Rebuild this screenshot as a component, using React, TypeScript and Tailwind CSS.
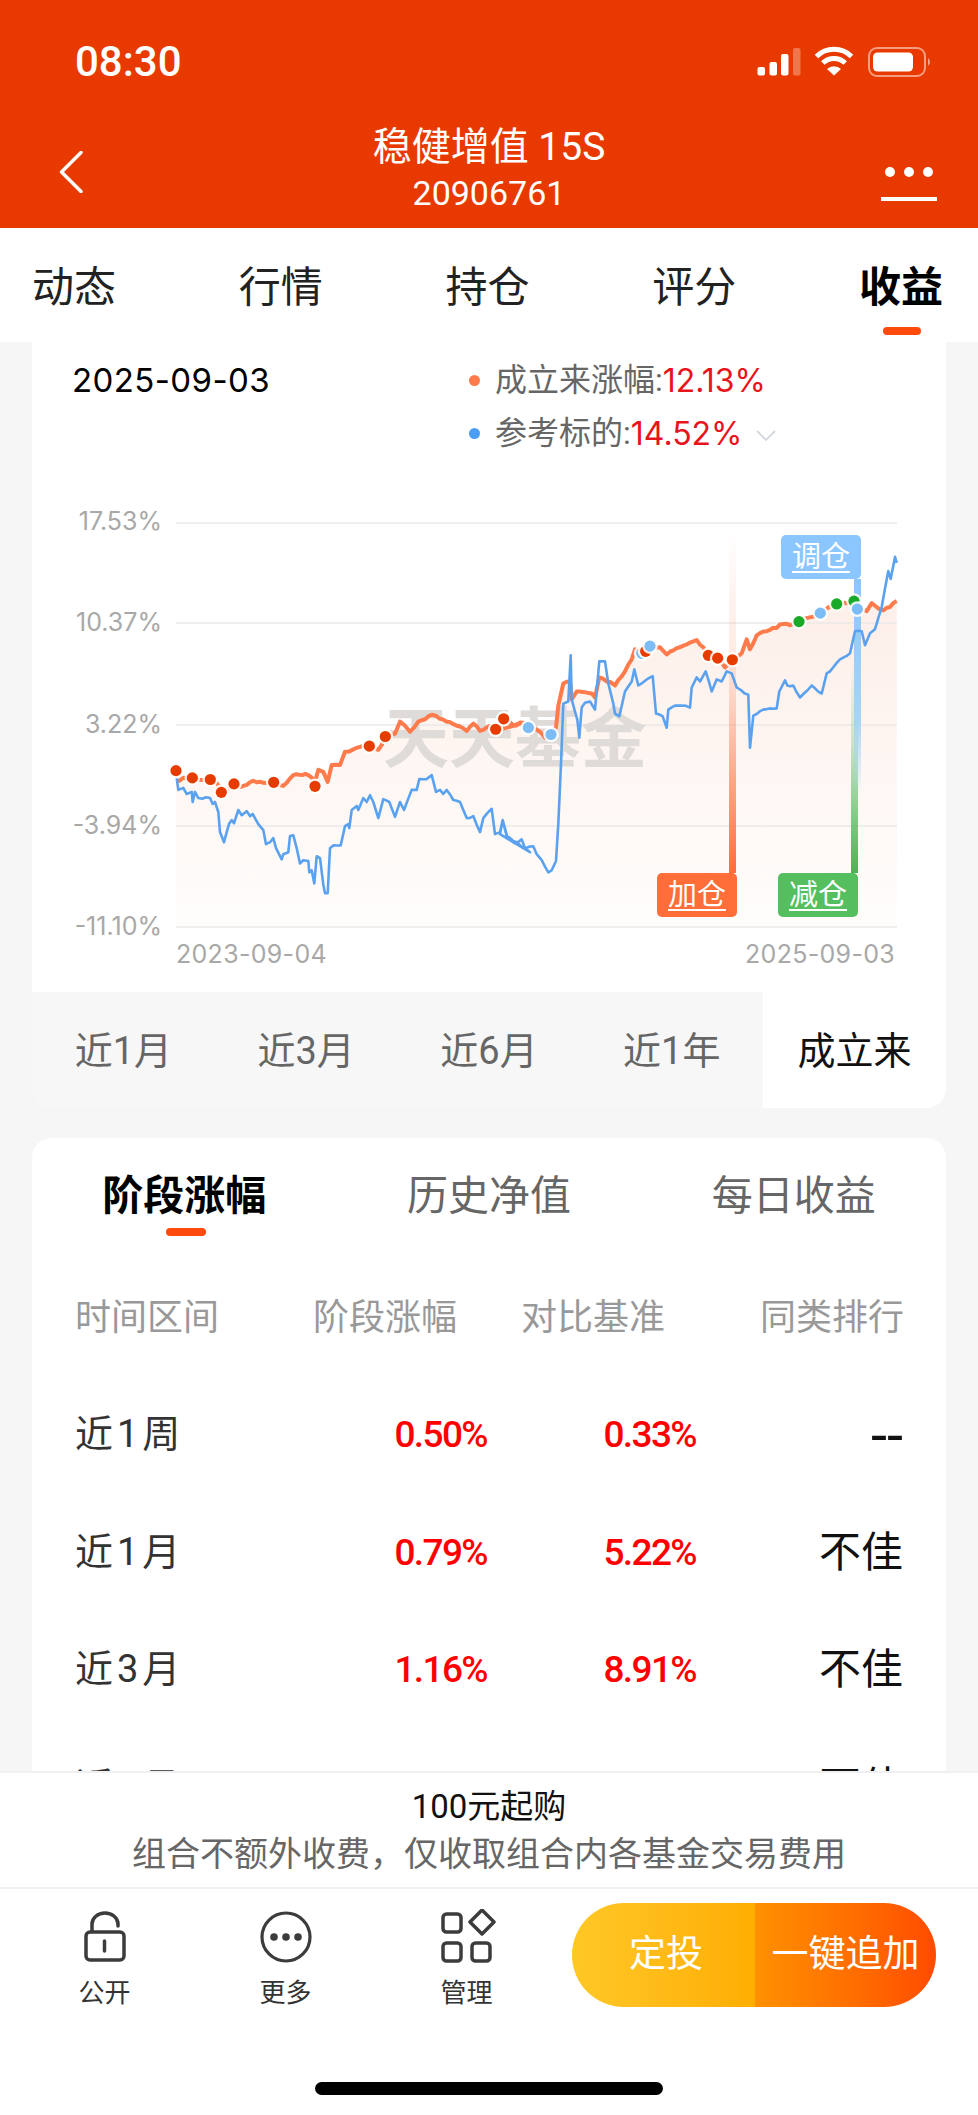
import React from "react";

// chart points were read off the crops, so map them back to page pixels
const a = (pts: number[][]) => pts.map(([x, y]) => [30 + x / 3, 350 + y / 2.489]);
const b = (pts: number[][]) => pts.map(([x, y]) => [500 + x / 3, 350 + y / 2.489]);
const str = (pts: number[][]) => pts.map(([x, y]) => `${x.toFixed(1)},${y.toFixed(1)}`).join(" ");

// daily noise between the read points, fixed so every render is the same
const rough = (pts: number[][], amp: number) => {
  const out: number[][] = [];
  let n = 0;
  pts.forEach((p, i) => {
    out.push(p);
    const next = pts[i + 1];
    if (!next) return;
    const steps = Math.floor((next[0] - p[0]) / 3);
    for (let s = 1; s < steps; s++) {
      n += 1;
      const r = Math.sin(n * 12.9898) * 43758.5453;
      const t = s / steps;
      out.push([p[0] + (next[0] - p[0]) * t, p[1] + (next[1] - p[1]) * t + (r - Math.floor(r) - 0.5) * amp]);
    }
  });
  return out;
};

const bluePts = [
  ...a([
    [440, 1065], [445, 1095], [460, 1090], [470, 1105], [485, 1100], [488, 1125], [495, 1100], [505, 1115], [540, 1115], [548, 1130],
    [555, 1125], [565, 1150], [570, 1200], [582, 1225], [590, 1200], [597, 1180], [605, 1170], [612, 1178], [625, 1145], [635, 1158],
    [650, 1148], [660, 1160], [668, 1155], [685, 1180], [700, 1195], [708, 1230], [720, 1225], [730, 1215], [738, 1240], [755, 1268],
    [760, 1255], [775, 1250], [780, 1210], [790, 1208], [800, 1240], [810, 1278], [820, 1270], [835, 1272], [838, 1300], [845, 1295],
    [853, 1328], [860, 1260], [870, 1265], [880, 1330], [885, 1352], [893, 1352], [900, 1240], [910, 1233], [932, 1233], [945, 1185],
    [955, 1180], [958, 1190], [965, 1145], [980, 1135], [985, 1145], [1000, 1115], [1010, 1125], [1020, 1108], [1030, 1125], [1045, 1165],
    [1060, 1118], [1078, 1125], [1095, 1162], [1110, 1125], [1122, 1145], [1145, 1095], [1160, 1095], [1168, 1068], [1190, 1068], [1205, 1058],
    [1218, 1100], [1230, 1095], [1240, 1105], [1250, 1095], [1270, 1120], [1290, 1125], [1310, 1165], [1330, 1160], [1350, 1200], [1360, 1165],
    [1385, 1142], [1395, 1205], [1410, 1200], [1418, 1170], [1432, 1212], [1455, 1228], [1475, 1218], [1485, 1240], [1500, 1250],
  ]),
  ...b([
    [0, 1205], [8, 1170], [20, 1210], [50, 1225], [70, 1240], [100, 1235], [110, 1255], [125, 1270], [145, 1300], [155, 1295],
    [168, 1272], [175, 1180], [183, 1030], [190, 880], [205, 875], [212, 760], [215, 870], [225, 900], [232, 920], [238, 965],
    [245, 890], [255, 878], [270, 875], [285, 895], [298, 775], [315, 775], [325, 830], [340, 880], [345, 905], [358, 912],
    [375, 850], [395, 825], [403, 795], [415, 835], [440, 820], [458, 812], [468, 905], [488, 912], [500, 940], [505, 895],
    [525, 885], [545, 885], [570, 890], [575, 840], [590, 815], [600, 825], [617, 800], [635, 850], [650, 820], [665, 825],
    [680, 800], [695, 805], [710, 840], [745, 858], [750, 990], [760, 910], [790, 895], [830, 892], [838, 850], [855, 822],
    [862, 835], [880, 835], [900, 865], [935, 835], [965, 855], [980, 805], [990, 800], [1020, 770], [1050, 755], [1065, 700],
    [1085, 700], [1095, 735], [1110, 705], [1125, 695], [1145, 640], [1165, 550], [1172, 570], [1185, 515], [1190, 530],
  ]),
];

const orangePts = [
  ...a([
    [438, 1072], [470, 1065], [520, 1070], [560, 1078], [575, 1095], [610, 1085], [640, 1085], [670, 1072], [710, 1078], [730, 1078],
    [760, 1085], [790, 1058], [835, 1058], [855, 1075], [865, 1045], [880, 1050], [893, 1075], [905, 1033], [930, 1033], [945, 1000],
    [980, 990], [1015, 985], [1045, 995], [1065, 965], [1095, 955], [1110, 925], [1125, 935], [1140, 950], [1165, 925], [1205, 908],
    [1240, 920], [1280, 935], [1310, 948], [1330, 930], [1350, 948], [1380, 935], [1400, 945], [1420, 920], [1450, 935], [1480, 928],
  ]),
  ...b([
    [0, 945], [12, 918], [40, 935], [70, 928], [85, 940], [120, 950], [135, 965], [155, 958], [168, 940], [175, 885],
    [190, 830], [210, 825], [215, 870], [230, 850], [275, 855], [285, 865], [298, 815], [320, 825], [345, 835], [375, 800],
    [395, 770], [405, 745], [430, 750], [450, 738], [480, 740], [500, 758], [540, 740], [590, 722], [610, 740], [625, 760],
    [655, 768], [675, 790], [697, 770], [725, 755], [740, 720], [750, 745], [770, 710], [800, 700], [850, 682], [870, 685],
    [895, 675], [960, 655], [1010, 632], [1062, 625], [1072, 645], [1100, 650], [1115, 630], [1150, 648], [1170, 640], [1190, 625],
  ]),
];

const dots = [
  ...a([[438, 1047], [487, 1065], [541, 1069], [574, 1101], [612, 1080], [731, 1076], [855, 1086], [1018, 986], [1066, 962], [1397, 944], [1421, 918]]).map((p) => ({ p, c: "#e63c00" })),
  ...b([[85, 940], [153, 957], [425, 755]]).map((p) => ({ p, c: "#7cbdf5" })),
  ...b([[437, 750], [625, 760], [653, 767], [697, 771]]).map((p) => ({ p, c: "#e63c00" })),
  ...b([[450, 737], [961, 655], [897, 676], [1010, 632], [1062, 625], [1072, 645]]).map((p, i) => ({ p, c: i === 0 || i === 1 || i === 5 ? "#7cbdf5" : "#1aaa28" })),
];

const gridYs = [523, 623, 725, 826, 927];

function Chart() {
  return (
    <svg viewBox="176 507 721 433" className="absolute inset-0 h-[433px] w-[721px] overflow-visible">
      <defs>
        <linearGradient id="area" x1="0" y1="0" x2="0" y2="1">
          <stop offset="0" stopColor="#fdefe9" />
          <stop offset="1" stopColor="#fffdfc" />
        </linearGradient>
        <linearGradient id="barO" x1="0" y1="0" x2="0" y2="1">
          <stop offset="0" stopColor="#ff7a4a" stopOpacity="0" />
          <stop offset="0.45" stopColor="#ff7a4a" stopOpacity="0.2" />
          <stop offset="1" stopColor="#ff6d38" />
        </linearGradient>
        <linearGradient id="barB" x1="0" y1="0" x2="0" y2="1">
          <stop offset="0" stopColor="#8cc6ff" />
          <stop offset="0.65" stopColor="#a6d4f5" />
          <stop offset="1" stopColor="#a6d4f5" stopOpacity="0" />
        </linearGradient>
        <linearGradient id="barG" x1="0" y1="0" x2="0" y2="1">
          <stop offset="0" stopColor="#4fb85c" stopOpacity="0" />
          <stop offset="0.4" stopColor="#4fb85c" stopOpacity="0.3" />
          <stop offset="1" stopColor="#45b552" />
        </linearGradient>
      </defs>
      <polygon points={`176,927 ${str(orangePts)} 897,927`} fill="url(#area)" />
      {gridYs.map((y) => (
        <line key={y} x1="176" x2="897" y1={y} y2={y} stroke="#ebe9e8" strokeWidth="1.5" />
      ))}
      <text x="383" y="762" fontSize="66" fontWeight="700" fill="#dfdbd8">天天基金</text>
      <rect x="729" y="531" width="7" height="342" fill="url(#barO)" />
      <rect x="851" y="660" width="7" height="213" fill="url(#barG)" />
      <rect x="854" y="579" width="7" height="215" fill="url(#barB)" />
      <polyline points={str(rough(orangePts, 2.4))} fill="none" stroke="#ff7b4c" strokeWidth="4" strokeLinejoin="round" />
      <polyline points={str(rough(bluePts, 1.8))} fill="none" stroke="#5aa2f0" strokeWidth="2.6" strokeLinejoin="round" />
      {dots.map(({ p, c }, i) => (
        <g key={i}>
          <circle cx={p[0]} cy={p[1]} r="7.8" fill="#fff" fillOpacity="0.9" />
          <circle cx={p[0]} cy={p[1]} r="5.6" fill={c} />
        </g>
      ))}
    </svg>
  );
}

function StatusIcons() {
  return (
    <svg viewBox="757 44 176 36" className="h-[36px] w-[176px]">
      <rect x="757.5" y="67" width="7.5" height="8.5" rx="2" fill="#fff" />
      <rect x="769.5" y="62" width="7.5" height="13.5" rx="2" fill="#fff" />
      <rect x="781" y="54" width="7.5" height="21.5" rx="2" fill="#fff" />
      <rect x="793" y="48" width="7.5" height="27.5" rx="2" fill="#fff" fillOpacity="0.3" />
      <path d="M816.5 56.5 A25 25 0 0 1 851.5 56.5" fill="none" stroke="#fff" strokeWidth="5" />
      <path d="M822.8 63 A16 16 0 0 1 845.2 63" fill="none" stroke="#fff" strokeWidth="5" />
      <path d="M827 69 A10 10 0 0 1 841 69 L834 75.5 Z" fill="#fff" />
      <rect x="869" y="48" width="56" height="28" rx="8" fill="none" stroke="#fff" strokeOpacity="0.5" strokeWidth="2" />
      <rect x="873" y="52.5" width="40" height="19" rx="4.5" fill="#fff" />
      <path d="M928 58 A5 5 0 0 1 928 66 Z" fill="#fff" fillOpacity="0.55" />
    </svg>
  );
}

function Header() {
  return (
    <div className="flex h-[228px] flex-col bg-[#e83a00] text-white">
      <div className="flex h-[124px] items-center justify-between pl-[75px] pr-[45px]">
        <span className="text-[42px] font-medium leading-none">08:30</span>
        <StatusIcons />
      </div>
      <div className="grid h-[104px] grid-cols-[1fr_auto_1fr]">
        <div className="pl-[59px] pt-[27px]">
          <svg viewBox="0 0 24 42" className="h-[42px] w-[24px]">
            <path d="M22 1.5 L2.5 21 L22 40.5" fill="none" stroke="#fff" strokeWidth="3.5" strokeLinecap="round" strokeLinejoin="round" />
          </svg>
        </div>
        <div className="flex flex-col items-center">
          <div className="text-[39px] leading-[46px]">稳健增值 15S</div>
          <div className="text-[34px] leading-[46px]">20906761</div>
        </div>
        <div className="flex flex-col items-end pr-[41px] pt-[43px]">
          <div className="flex w-[56px] justify-center gap-[9px]">
            <span className="size-[10px] rounded-full bg-white" />
            <span className="size-[10px] rounded-full bg-white" />
            <span className="size-[10px] rounded-full bg-white" />
          </div>
          <div className="mt-[20px] h-[4px] w-[56px] bg-white" />
        </div>
      </div>
    </div>
  );
}

function TopTabs() {
  const tabs = ["动态", "行情", "持仓", "评分", "收益"];
  return (
    <div className="flex h-[114px] items-center justify-between bg-white pl-[32px] pr-[35px] pt-[5px]">
      {tabs.map((t) => (
        <div key={t} className={`relative text-[42px] leading-[56px] ${t === "收益" ? "font-bold text-black" : "text-[#222]"}`}>
          {t}
          {t === "收益" && <span className="absolute left-[24px] top-[67px] h-[8px] w-[38px] rounded-full bg-[#ff4a0c]" />}
        </div>
      ))}
    </div>
  );
}

function ChartCard() {
  const yLabels = ["17.53%", "10.37%", "3.22%", "-3.94%", "-11.10%"];
  const periods = ["近1月", "近3月", "近6月", "近1年"];
  return (
    <div className="overflow-hidden rounded-b-[20px] bg-white">
      <div className="flex pt-[12px]">
        <div className="w-[437px] pl-[40px] font-['Inter'] text-[33px] leading-[53px] tracking-[0.4px] text-black">2025-09-03</div>
        <div className="flex flex-col text-[32px] leading-[53px] text-[#666]">
          <div className="flex items-center">
            <span className="mr-[15px] size-[11px] rounded-full bg-[#ff7b4c]" />
            成立来涨幅:<span className="font-['Inter'] text-[#e8141c]">12.13%</span>
          </div>
          <div className="flex items-center">
            <span className="mr-[15px] size-[11px] rounded-full bg-[#4a9ff5]" />
            参考标的:<span className="font-['Inter'] text-[#e8141c]">14.52%</span>
            <svg viewBox="0 0 20 12" className="ml-[13px] mt-[4px] h-[12px] w-[20px]">
              <path d="M1 1 L10 10 L19 1" fill="none" stroke="#d4d8de" strokeWidth="1.8" />
            </svg>
          </div>
        </div>
      </div>

      <div className="mt-[47px] flex">
        <div className="flex h-[433px] w-[130px] flex-col justify-between text-right font-['Inter'] text-[25px] leading-[28px] text-[#a8a8a8]">
          {yLabels.map((l) => (
            <div key={l}>{l}</div>
          ))}
        </div>
        <div className="relative ml-[14px] h-[433px] w-[721px]">
          <Chart />
          <div className="absolute left-[605px] top-[28px] flex h-[44px] w-[80px] items-center justify-center rounded-[5px] bg-[#8cc6ff] text-[29px] leading-none text-white underline underline-offset-4">调仓</div>
          <div className="absolute left-[481px] top-[366px] flex h-[44px] w-[80px] items-center justify-center rounded-[5px] bg-[#ff6d38] text-[29px] leading-none text-white underline underline-offset-4">加仓</div>
          <div className="absolute left-[602px] top-[366px] flex h-[44px] w-[80px] items-center justify-center rounded-[5px] bg-[#55bf5f] text-[29px] leading-none text-white underline underline-offset-4">减仓</div>
        </div>
      </div>
      <div className="ml-[144px] flex h-[28px] w-[719px] items-center justify-between font-['Inter'] text-[25px] leading-[28px] tracking-[0.3px] text-[#a8a8a8]">
        <span>2023-09-04</span>
        <span>2025-09-03</span>
      </div>

      <div className="mt-[24px] grid h-[116px] grid-cols-5 text-[38px]">
        {periods.map((p) => (
          <div key={p} className="flex items-center justify-center bg-[#f7f7f7] pt-[3px] text-[#666]">{p}</div>
        ))}
        <div className="flex items-center justify-center bg-white pt-[3px] text-[#111]">成立来</div>
      </div>
    </div>
  );
}

function ReturnsCard() {
  const rows = [
    ["近1周", "0.50%", "0.33%", "--"],
    ["近1月", "0.79%", "5.22%", "不佳"],
    ["近3月", "1.16%", "8.91%", "不佳"],
    ["近6月", "", "", "不佳"],
  ];
  return (
    <div className="mt-[30px] rounded-t-[20px] bg-white">
      <div className="grid h-[118px] grid-cols-3 items-center text-center text-[41px]">
        <div className="relative font-bold text-black">
          阶段涨幅
          <span className="absolute left-[134px] top-[62px] h-[8px] w-[40px] rounded-full bg-[#ff4a0c]" />
        </div>
        <div className="text-[#666]">历史净值</div>
        <div className="text-[#666]">每日收益</div>
      </div>
      <div className="mt-[31px] flex h-[62px] items-center pl-[43px] text-[36px] text-[#999]">
        <div className="w-[383px]">时间区间</div>
        <div className="w-[0px] -translate-x-[145px] whitespace-nowrap">阶段涨幅</div>
        <div className="ml-[63px] w-[144px] whitespace-nowrap">对比基准</div>
        <div className="ml-[95px] w-[144px] whitespace-nowrap">同类排行</div>
      </div>
      <div className="mt-[27px] flex flex-col pl-[43px]">
        {rows.map((r) => (
          <div key={r[0]} className="flex h-[117.5px] items-center">
            <div className="w-[200px] text-[38px] tracking-[4px] text-[#333]">{r[0]}</div>
            <div className="w-[212px] text-right text-[37px] font-medium tracking-[-1.6px] text-[#ff0000]">{r[1]}</div>
            <div className="w-[209px] text-right text-[37px] font-medium tracking-[-1.6px] text-[#ff0000]">{r[2]}</div>
            <div className={`w-[207px] text-right text-[#111] ${r[3] === "--" ? "text-[58px] leading-none" : "text-[42px]"}`}>{r[3]}</div>
          </div>
        ))}
      </div>
    </div>
  );
}

function Footer() {
  return (
    <div className="relative border-t-2 border-[#f0f0f2] bg-white pb-[20px]">
      <div className="border-b-2 border-[#f0f0f2] pb-[10px] pt-[11px] text-center">
        <div className="text-[33px] leading-[46px] text-[#111]">100元起购</div>
        <div className="mt-[1px] text-[34px] leading-[46px] text-[#666]">组合不额外收费，仅收取组合内各基金交易费用</div>
      </div>
      <div className="flex pt-[14px]">
        <div className="ml-[14px] flex w-[181px] flex-col items-center pt-[6px]">
          <svg viewBox="75 1909 60 56" className="h-[56px] w-[60px]" fill="none" stroke="#3c3c3c" strokeWidth="3.5" strokeLinecap="round">
            <rect x="86" y="1932" width="38" height="28" rx="4" />
            <path d="M92 1931 V1924 A13 11 0 0 1 118 1924 V1926" />
            <path d="M104.5 1941 V1951" />
          </svg>
          <span className="mt-[10px] text-[26px] leading-[36px] text-[#333]">公开</span>
        </div>
        <div className="flex w-[181px] flex-col items-center pt-[6px]">
          <svg viewBox="256 1909 60 56" className="h-[56px] w-[60px]" fill="none" stroke="#3c3c3c" strokeWidth="3.2">
            <circle cx="286" cy="1937" r="24" />
            <circle cx="274" cy="1937" r="3.8" fill="#3c3c3c" stroke="none" />
            <circle cx="286" cy="1937" r="3.8" fill="#3c3c3c" stroke="none" />
            <circle cx="298" cy="1937" r="3.8" fill="#3c3c3c" stroke="none" />
          </svg>
          <span className="mt-[10px] text-[26px] leading-[36px] text-[#333]">更多</span>
        </div>
        <div className="flex w-[181px] flex-col items-center pt-[6px]">
          <svg viewBox="437 1909 60 56" className="h-[56px] w-[60px]" fill="none" stroke="#3c3c3c" strokeWidth="3.5" strokeLinejoin="round">
            <rect x="443" y="1914" width="18" height="18" rx="3.5" />
            <path d="M482 1910 L494 1922 L482 1934 L470 1922 Z" />
            <rect x="443" y="1943" width="18" height="18" rx="3.5" />
            <rect x="472" y="1943" width="18" height="18" rx="3.5" />
          </svg>
          <span className="mt-[10px] text-[26px] leading-[36px] text-[#333]">管理</span>
        </div>
        <div className="ml-[15px] flex h-[104px] w-[364px] overflow-hidden rounded-full text-[37px] text-white">
          <div className="flex w-[183px] items-center justify-center bg-gradient-to-r from-[#ffc825] to-[#ffad00] pl-[5px]">定投</div>
          <div className="flex w-[181px] items-center justify-center bg-gradient-to-r from-[#ff9000] to-[#ff4a00]">一键追加</div>
        </div>
      </div>
      <div className="mx-auto mt-[71px] h-[13px] w-[348px] rounded-full bg-black" />
    </div>
  );
}

export default function App() {
  return (
    <div className="flex h-[2115px] w-[978px] flex-col overflow-hidden bg-white font-['Roboto','Noto_Sans_CJK_SC',sans-serif]">
      <Header />
      <TopTabs />
      <div className="min-h-0 flex-1 overflow-hidden bg-[#f6f6f6] px-[32px]">
        <ChartCard />
        <ReturnsCard />
      </div>
      <Footer />
    </div>
  );
}
